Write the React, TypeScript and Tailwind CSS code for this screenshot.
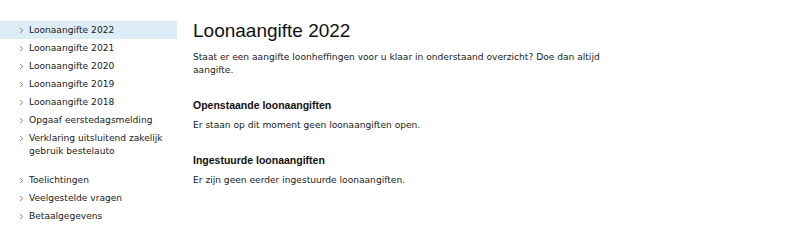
import { ChevronRight } from "lucide-react";

const primary = [
  "Loonaangifte 2022",
  "Loonaangifte 2021",
  "Loonaangifte 2020",
  "Loonaangifte 2019",
  "Loonaangifte 2018",
  "Opgaaf eerstedagsmelding",
  "Verklaring uitsluitend zakelijk gebruik bestelauto",
];

const secondary = ["Toelichtingen", "Veelgestelde vragen", "Betaalgegevens"];

function NavItem({ label, active }: { label: string; active?: boolean }) {
  return (
    <li
      className={`flex items-start gap-[3px] py-[2.5px] pl-[17px] pr-3 leading-[13px] ${
        active ? "bg-[#dcedf8]" : ""
      }`}
    >
      <ChevronRight className="mt-[2px] h-[9px] w-[9px] shrink-0 text-[#555]" strokeWidth={2} />
      <span className="max-w-[150px]">{label}</span>
    </li>
  );
}

export default function App() {
  return (
    <div className="flex h-[231px] w-[800px] bg-white pt-[21px] font-['DejaVu_Sans',sans-serif] text-[9.1px] text-[#1a1a1a]">
      <nav className="w-[177px] shrink-0">
        <ul>
          {primary.map((item, i) => (
            <NavItem key={item} label={item} active={i === 0} />
          ))}
        </ul>
        <ul className="mt-[11px]">
          {secondary.map((item) => (
            <NavItem key={item} label={item} />
          ))}
        </ul>
      </nav>

      <main className="ml-[16px] w-[420px]">
        <h1 className="font-['Liberation_Sans',sans-serif] text-[19px] leading-[20px] text-[#111]">
          Loonaangifte 2022
        </h1>
        <p className="mt-[10px] leading-[13px]">
          Staat er een aangifte loonheffingen voor u klaar in onderstaand overzicht? Doe dan altijd
          aangifte.
        </p>

        <h2 className="mt-[22px] font-['Liberation_Sans',sans-serif] text-[10.5px] font-bold leading-[13px] text-[#111]">
          Openstaande loonaangiften
        </h2>
        <p className="mt-[7px] leading-[13px]">Er staan op dit moment geen loonaangiften open.</p>

        <h2 className="mt-[22px] font-['Liberation_Sans',sans-serif] text-[10.5px] font-bold leading-[13px] text-[#111]">
          Ingestuurde loonaangiften
        </h2>
        <p className="mt-[7px] leading-[13px]">Er zijn geen eerder ingestuurde loonaangiften.</p>
      </main>
    </div>
  );
}
